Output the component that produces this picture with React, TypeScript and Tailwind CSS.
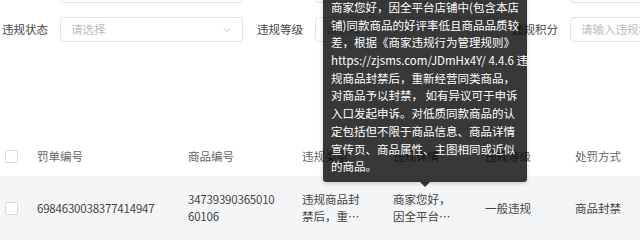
import { ChevronDown } from 'lucide-react';

type Field = {
  label: string;
  placeholder: string;
  kind: 'select' | 'input';
};

const formRows: Field[][] = [
  [
    { label: '罚单编号', placeholder: '请输入罚单编号', kind: 'input' },
    { label: '商品编号', placeholder: '请输入商品编号', kind: 'input' },
    { label: '违规类型', placeholder: '请选择', kind: 'select' },
  ],
  [
    { label: '违规状态', placeholder: '请选择', kind: 'select' },
    { label: '违规等级', placeholder: '请选择', kind: 'select' },
    { label: '违规积分', placeholder: '请输入违规积分', kind: 'input' },
  ],
];

const tooltipLines = [
  '商家您好，因全平台店铺中(包含本店',
  '铺)同款商品的好评率低且商品品质较',
  '差，根据《商家违规行为管理规则》',
  'https://zjsms.com/JDmHx4Y/ 4.4.6 违',
  '规商品封禁后，重新经营同类商品，',
  '对商品予以封禁， 如有异议可于申诉',
  '入口发起申诉。对低质同款商品的认',
  '定包括但不限于商品信息、商品详情',
  '宣传页、商品属性、主图相同或近似',
  '的商品。',
];

const columns = ['罚单编号', '商品编号', '违规类型', '违规详情', '违规等级', '处罚方式'];

const Checkbox = () => (
  <span className="block h-[13px] w-[13px] rounded-[2px] border border-[#d9d9d9] bg-white" />
);

const FormField = ({ field }: { field: Field }) => (
  <div className="flex items-center">
    <span className="w-[58px] shrink-0 text-[#444]">{field.label}</span>
    <div className="flex h-[25px] w-[183px] shrink-0 items-center justify-between rounded-[4px] border border-[#e1e1e1] bg-white pl-[10px] pr-[9px]">
      <span className="text-[#bdbdbd]">{field.placeholder}</span>
      {field.kind === 'select' && (
        <ChevronDown size={12} strokeWidth={1.4} className="text-[#a8a8a8]" />
      )}
    </div>
  </div>
);

export default function App() {
  return (
    <div className="relative h-[243px] w-[640px] overflow-hidden bg-white font-['Noto_Sans_CJK_SC','Noto_Sans',sans-serif] text-[11.5px] leading-[17px]">
      <div className="-mt-[22px] flex flex-col gap-[14px] pl-[2px]">
        {formRows.map((row, i) => (
          <div key={i} className="flex gap-[14px]">
            {row.map((field) => (
              <FormField key={field.label} field={field} />
            ))}
          </div>
        ))}
      </div>

      <div className="mt-[94px]">
        <div className="grid h-[40px] grid-cols-[37px_151px_114px_91px_92px_90px_1fr] items-center text-[#666]">
          <div className="pl-[5px]">
            <Checkbox />
          </div>
          {columns.map((c) => (
            <div key={c}>{c}</div>
          ))}
        </div>
        <div className="grid h-[64px] grid-cols-[37px_151px_114px_91px_92px_90px_1fr] items-center bg-[#f4f5f7] text-[#444]">
          <div className="pl-[5px]">
            <Checkbox />
          </div>
          <div className="tracking-[-0.2px]">6984630038377414947</div>
          <div className="w-[91px] break-all tracking-[-0.2px]">3473939036501060106</div>
          <div className="line-clamp-2 w-[62px]">
            违规商品封禁后，重新经营同类商品，对商品予以封禁
          </div>
          <div className="line-clamp-2 w-[62px]">
            商家您好，因全平台店铺中(包含本店铺)同款商品的好评率低且商品品质较差
          </div>
          <div>一般违规</div>
          <div>商品封禁</div>
        </div>
      </div>

      <div className="absolute bottom-[61px] left-[323px] w-[204px] rounded-[3px] bg-black/[0.78] px-[8px] py-[6px] leading-[17.7px] text-white shadow-[0_1px_4px_rgba(0,0,0,0.2)]">
        {tooltipLines.map((line) => (
          <div key={line} className="whitespace-nowrap">
            {line}
          </div>
        ))}
        <span className="absolute -bottom-[5px] left-1/2 h-0 w-0 -translate-x-1/2 border-x-[5px] border-t-[5px] border-x-transparent border-t-black/[0.78]" />
      </div>
    </div>
  );
}
